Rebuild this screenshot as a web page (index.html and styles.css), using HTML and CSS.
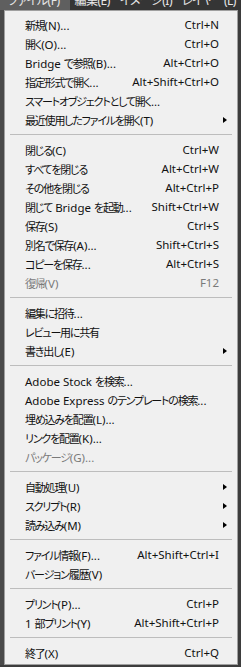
FILE: index.html
```html
<!DOCTYPE html>
<html lang="ja">
<head>
<meta charset="utf-8">
<link rel="stylesheet" href="styles.css">
</head>
<body>
<div class="menubar">
  <span class="tab active">ファイル(F)</span>
  <span class="tab">編集(E)</span>
  <span class="tab">イメージ(I)</span>
  <span class="tab">レイヤー(L)</span>
  <span class="tab">E</span>
</div>
<div class="stage">
  <div class="strip"></div>
  <div class="menu">
    <div class="item"><span><span class="j">新規</span>(N)...</span><span class="key">Ctrl+N</span></div>
    <div class="item"><span><span class="j">開く</span>(O)...</span><span class="key">Ctrl+O</span></div>
    <div class="item"><span>Bridge <span class="j">で参照</span>(B)...</span><span class="key">Alt+Ctrl+O</span></div>
    <div class="item"><span><span class="j">指定形式で開く</span>...</span><span class="key">Alt+Shift+Ctrl+O</span></div>
    <div class="item"><span><span class="j">スマートオブジェクトとして開く</span>...</span></div>
    <div class="item sub"><span><span class="j">最近使用したファイルを開く</span>(T)</span><i class="arrow"></i></div>
    <div class="sep"></div>
    <div class="item"><span><span class="j">閉じる</span>(C)</span><span class="key">Ctrl+W</span></div>
    <div class="item"><span><span class="j">すべてを閉じる</span></span><span class="key">Alt+Ctrl+W</span></div>
    <div class="item"><span><span class="j">その他を閉じる</span></span><span class="key">Alt+Ctrl+P</span></div>
    <div class="item"><span><span class="j">閉じて</span> Bridge <span class="j">を起動</span>...</span><span class="key">Shift+Ctrl+W</span></div>
    <div class="item"><span><span class="j">保存</span>(S)</span><span class="key">Ctrl+S</span></div>
    <div class="item"><span><span class="j">別名で保存</span>(A)...</span><span class="key">Shift+Ctrl+S</span></div>
    <div class="item"><span><span class="j">コピーを保存</span>...</span><span class="key">Alt+Ctrl+S</span></div>
    <div class="item dis"><span><span class="j">復帰</span>(V)</span><span class="key">F12</span></div>
    <div class="sep"></div>
    <div class="item"><span><span class="j">編集に招待</span>...</span></div>
    <div class="item"><span><span class="j">レビュー用に共有</span></span></div>
    <div class="item sub"><span><span class="j">書き出し</span>(E)</span><i class="arrow"></i></div>
    <div class="sep"></div>
    <div class="item"><span>Adobe Stock <span class="j">を検索</span>...</span></div>
    <div class="item"><span>Adobe Express <span class="j">のテンプレートの検索</span>...</span></div>
    <div class="item"><span><span class="j">埋め込みを配置</span>(L)...</span></div>
    <div class="item"><span><span class="j">リンクを配置</span>(K)...</span></div>
    <div class="item dis"><span><span class="j">パッケージ</span>(G)...</span></div>
    <div class="sep"></div>
    <div class="item sub"><span><span class="j">自動処理</span>(U)</span><i class="arrow"></i></div>
    <div class="item sub"><span><span class="j">スクリプト</span>(R)</span><i class="arrow"></i></div>
    <div class="item sub"><span><span class="j">読み込み</span>(M)</span><i class="arrow"></i></div>
    <div class="sep"></div>
    <div class="item"><span><span class="j">ファイル情報</span>(F)...</span><span class="key">Alt+Shift+Ctrl+I</span></div>
    <div class="item"><span><span class="j">バージョン履歴</span>(V)</span></div>
    <div class="sep"></div>
    <div class="item"><span><span class="j">プリント</span>(P)...</span><span class="key">Ctrl+P</span></div>
    <div class="item"><span>1 <span class="j">部プリント</span>(Y)</span><span class="key">Alt+Shift+Ctrl+P</span></div>
    <div class="sep"></div>
    <div class="item"><span><span class="j">終了</span>(X)</span><span class="key">Ctrl+Q</span></div>
  </div>
</div>
</body>
</html>
```

FILE: styles.css
```css
html, body {
  margin: 0;
  padding: 0;
}
body {
  width: 241px;
  height: 667px;
  overflow: hidden;
  background: #3d3d3d;
  font-family: "Noto Sans", "Noto Sans CJK JP", sans-serif;
}
.menubar {
  height: 10px;
  background: #353535;
  display: flex;
  overflow: hidden;
}
.tab {
  color: #e6e6e6;
  font-size: 12px;
  line-height: 12px;
  margin-top: -5px;
  padding: 0 5px;
  white-space: nowrap;
  font-feature-settings: "palt";
  letter-spacing: -0.5px;
}
.tab.active {
  background: #5f5f5f;
  padding: 0 10px 0 8px;
}
.stage {
  display: flex;
}
.strip {
  width: 4px;
  background: #4a4a4a;
}
.menu {
  width: 232px;
  background: #f0f0f0;
  border: 1px solid #a0a0a0;
  padding: 4px 0 2px;
}
.item {
  height: 19px;
  display: flex;
  align-items: center;
  justify-content: space-between;
  padding: 0 18px 0 20px;
  font-size: 11.5px;
  color: #111;
  white-space: nowrap;
}
.j {
  font-family: "Noto Sans CJK JP", sans-serif;
  font-feature-settings: "palt";
  letter-spacing: -1.2px;
  font-size: 11px;
}
.item.dis {
  color: #7a7a7a;
}
.key {
  text-align: right;
}
.sub {
  padding-right: 10px;
}
.arrow {
  width: 0;
  height: 0;
  border-top: 3.5px solid transparent;
  border-bottom: 3.5px solid transparent;
  border-left: 4px solid #000;
}
.sep {
  height: 1px;
  background: #bdbdbd;
  margin: 5px 5px 5px 5px;
}
```
